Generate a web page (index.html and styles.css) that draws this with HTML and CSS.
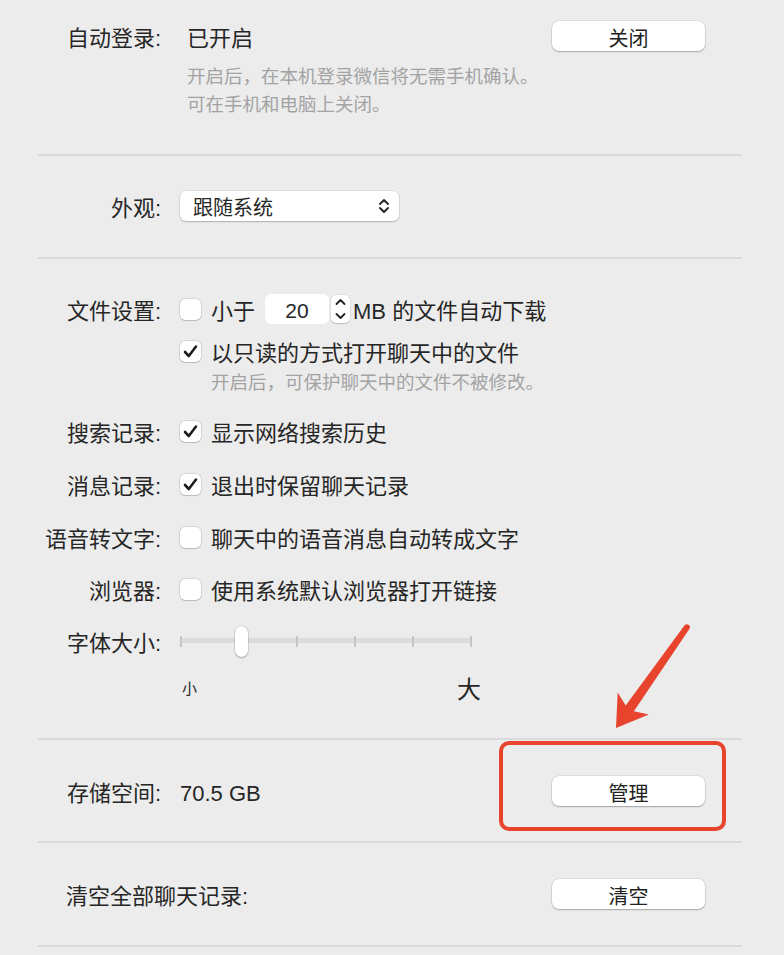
FILE: index.html
```html
<!DOCTYPE html>
<html lang="zh-CN">
<head>
    <meta charset="UTF-8">
    <meta name="viewport" content="width=device-width, initial-scale=1.0">
    <title>通用设置</title>
    <link rel="stylesheet" href="styles.css">
</head>
<body>
    <div class="page">
        <!-- 登录 -->
        <section class="section first">
            <div class="row">
                <span class="label">自动登录:</span>
                <span class="value indent">已开启</span>
                <button class="btn">关闭</button>
            </div>
            <p class="hint indent-hint">开启后，在本机登录微信将无需手机确认。<br>可在手机和电脑上关闭。</p>
        </section>

        <!-- 外观 -->
        <section class="section look">
            <div class="row">
                <span class="label">外观:</span>
                <div class="popup">
                    <span class="value">跟随系统</span>
                    <svg class="updown" width="12" height="16" viewBox="0 0 12 16">
                        <polyline points="2,6 6,2 10,6" />
                        <polyline points="2,10 6,14 10,10" />
                    </svg>
                </div>
            </div>
        </section>

        <!-- 文件与记录 -->
        <section class="section files">
            <div class="row">
                <span class="label">文件设置:</span>
                <span class="check"></span>
                <span class="text">小于</span>
                <span class="num">20</span>
                <span class="stepper">
                    <svg width="19" height="28" viewBox="0 0 19 28">
                        <polyline points="5.5,9 9.5,5 13.5,9" />
                        <polyline points="5.5,19 9.5,23 13.5,19" />
                    </svg>
                </span>
                <span class="unit">MB 的文件自动下载</span>
            </div>
            <div class="row sub">
                <span class="label"></span>
                <span class="check on"><svg width="21" height="21" viewBox="0 0 21 21"><polyline points="5,11 8.8,15 16,5.5" /></svg></span>
                <span class="text">以只读的方式打开聊天中的文件</span>
            </div>
            <p class="hint indent-sub">开启后，可保护聊天中的文件不被修改。</p>

            <div class="row r1">
                <span class="label">搜索记录:</span>
                <span class="check on"><svg width="21" height="21" viewBox="0 0 21 21"><polyline points="5,11 8.8,15 16,5.5" /></svg></span>
                <span class="text">显示网络搜索历史</span>
            </div>
            <div class="row r2">
                <span class="label">消息记录:</span>
                <span class="check on"><svg width="21" height="21" viewBox="0 0 21 21"><polyline points="5,11 8.8,15 16,5.5" /></svg></span>
                <span class="text">退出时保留聊天记录</span>
            </div>
            <div class="row r2">
                <span class="label">语音转文字:</span>
                <span class="check"></span>
                <span class="text">聊天中的语音消息自动转成文字</span>
            </div>
            <div class="row r3">
                <span class="label">浏览器:</span>
                <span class="check"></span>
                <span class="text">使用系统默认浏览器打开链接</span>
            </div>
            <div class="row r3">
                <span class="label">字体大小:</span>
                <div class="slider">
                    <i></i><i></i><i></i><i></i><i></i><i></i>
                    <span class="thumb"></span>
                </div>
            </div>
            <div class="sizes">
                <span class="small">小</span>
                <span class="big">大</span>
            </div>
        </section>

        <!-- 存储 -->
        <section class="section storage">
            <div class="row">
                <span class="label">存储空间:</span>
                <span class="value">70.5 GB</span>
                <button class="btn">管理</button>
            </div>
        </section>

        <section class="section storage last">
            <div class="row">
                <span class="label wide">清空全部聊天记录:</span>
                <button class="btn">清空</button>
            </div>
        </section>

        <!-- 红色标注 -->
        <svg class="mark" width="784" height="955" viewBox="0 0 784 955">
            <path d="M616 728 L617.7 692.5 L625.7 705.5 L684.6 625.3 A3 3 0 0 1 689.5 628.7 L633.9 711.3 L648.8 714.4 Z" />
            <rect x="501" y="743" width="223" height="86" rx="8" />
        </svg>
    </div>
</body>
</html>
```

FILE: styles.css
```css
body {
    margin: 0;
    background-color: #ececec;
    font-family: "Liberation Sans", "Noto Sans CJK SC", sans-serif;
    color: #262626;
}
.page {
    position: relative;
    width: 704px;
    height: 955px;
    padding-left: 38px;
    overflow: hidden;
}
.section {
    padding: 35px 0;
    border-bottom: 2px solid #dadada;
}
.section.first {
    padding-top: 21px;
}
.section.look {
    padding-bottom: 36px;
}
.row {
    display: flex;
    align-items: center;
    height: 30px;
    font-size: 22px;
    line-height: 30px;
}
/* 文字略向下对齐 */
.label,
.value,
.text,
.unit {
    padding-top: 5px;
}
.label {
    width: 123px;
    margin-right: 19px;
    flex-shrink: 0;
    text-align: right;
    white-space: nowrap;
}
.label.wide {
    width: auto;
    margin-left: 28px;
    text-align: left;
}
.indent {
    padding-left: 7px;
}
.hint {
    margin: 12px 0 0;
    font-size: 18.5px;
    line-height: 28px;
    color: #a3a3a3;
}
.indent-hint {
    padding-left: 149px;
}
.btn {
    width: 153px;
    height: 30px;
    margin-left: auto;
    margin-right: 37px;
    padding: 2px 0 0;
    font-family: inherit;
    font-size: 20px;
    color: #222;
    background-color: #fff;
    border: none;
    border-radius: 7px;
    box-shadow: 0 0 0 0.5px rgba(0, 0, 0, 0.12), 0 1px 1.5px rgba(0, 0, 0, 0.25);
}

/* 弹出菜单 */
.popup {
    display: flex;
    align-items: center;
    justify-content: space-between;
    width: 219px;
    height: 30px;
    box-sizing: border-box;
    padding: 0 9px 0 13px;
    font-size: 20px;
    background-color: #fff;
    border-radius: 6px;
    box-shadow: 0 0 0 0.5px rgba(0, 0, 0, 0.1), 0 1px 1.5px rgba(0, 0, 0, 0.22);
}
.popup .value {
    padding-top: 3px;
}
.updown polyline,
.stepper polyline {
    fill: none;
    stroke: #222;
    stroke-width: 1.8;
    stroke-linecap: round;
    stroke-linejoin: round;
}

/* 复选框 */
.check {
    width: 21px;
    height: 21px;
    flex-shrink: 0;
    background-color: #fff;
    border-radius: 5px;
    box-shadow: 0 0 0 0.5px rgba(0, 0, 0, 0.2), 0 1px 1px rgba(0, 0, 0, 0.12);
}
.check svg {
    display: block;
}
.check polyline {
    fill: none;
    stroke: #1e1e1e;
    stroke-width: 2.6;
    stroke-linecap: round;
    stroke-linejoin: round;
}
.text {
    margin-left: 10px;
    white-space: nowrap;
}
.num {
    width: 64px;
    height: 30px;
    margin-left: 10px;
    font-size: 21px;
    line-height: 34px;
    text-align: center;
    background-color: #fff;
    border-radius: 6px;
}
.stepper {
    width: 19px;
    height: 28px;
    margin-left: 2px;
    background-color: #fff;
    border-radius: 5px;
    box-shadow: 0 0 0 0.5px rgba(0, 0, 0, 0.1), 0 1px 1px rgba(0, 0, 0, 0.15);
}
.stepper svg {
    display: block;
}
.unit {
    margin-left: 3px;
    white-space: nowrap;
}
.files .sub {
    height: 28px;
    margin-top: 13px;
}
.hint.indent-sub {
    margin-top: 3px;
    padding-left: 173px;
    padding-top: 3px;
    line-height: 24px;
}
.files .r1 {
    margin-top: 21px;
}
.files .r2 {
    margin-top: 23px;
}
.files .r3 {
    margin-top: 22px;
}

/* 字号滑块 */
.slider {
    position: relative;
    display: flex;
    align-items: center;
    justify-content: space-between;
    width: 292px;
    height: 30px;
}
.slider::before {
    content: "";
    position: absolute;
    left: 0;
    right: 0;
    top: 12px;
    height: 5px;
    background-color: #dcdcdc;
    border-radius: 3px;
}
.slider i {
    position: relative;
    width: 2px;
    height: 11px;
    background-color: #c6c6c6;
}
.slider .thumb {
    position: absolute;
    left: 55px;
    top: 0;
    width: 13px;
    height: 31px;
    background-color: #fff;
    border-radius: 7px;
    box-shadow: 0 0 0 0.5px rgba(0, 0, 0, 0.12), 0 1px 2px rgba(0, 0, 0, 0.28);
}
.sizes {
    display: flex;
    align-items: center;
    justify-content: space-between;
    width: 299px;
    height: 20px;
    margin: 21px 0 0 142px;
    padding-left: 2px;
}
.sizes .small {
    font-size: 15px;
}
.sizes .big {
    font-size: 24px;
}
.files {
    padding-bottom: 41px;
}
.storage {
    padding-top: 36px;
}
.storage.last {
    padding-bottom: 36px;
}

/* 标注层 */
.mark {
    position: absolute;
    left: 0;
    top: 0;
    pointer-events: none;
}
.mark path {
    fill: #e8432d;
}
.mark rect {
    fill: none;
    stroke: #e8432d;
    stroke-width: 4;
}
```
